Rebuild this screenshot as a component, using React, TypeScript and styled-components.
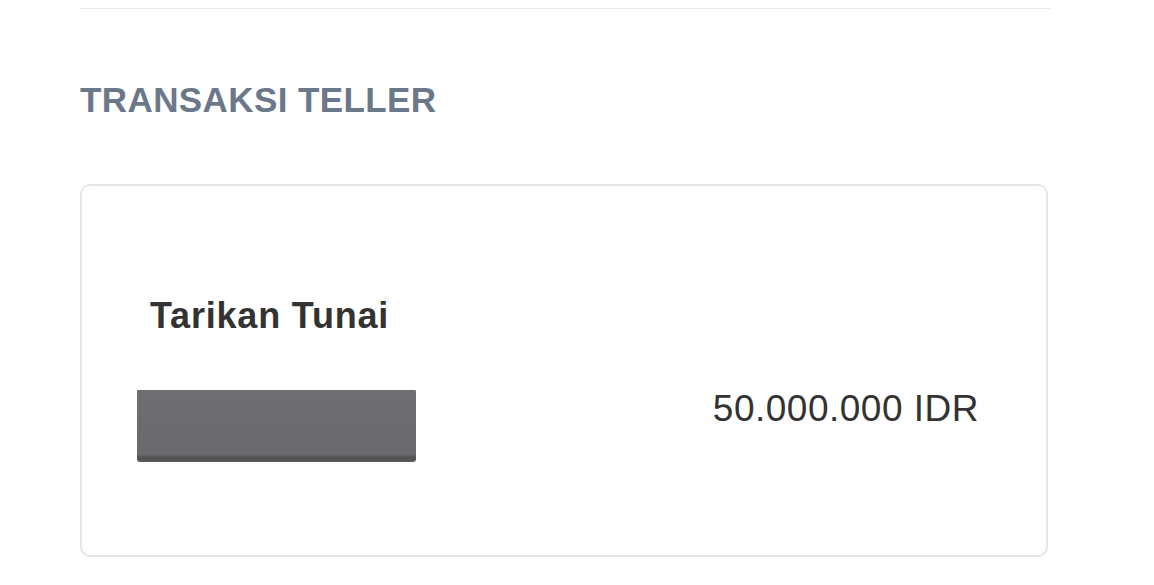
import { createGlobalStyle } from 'styled-components';
import styled from 'styled-components';

const GlobalStyle = createGlobalStyle`
  html, body {
    margin: 0;
    padding: 0;
    background: #ffffff;
    font-family: "Liberation Sans", Arial, sans-serif;
  }
`;

const Page = styled.div`
  width: 970px;
  margin-left: 80px;
  padding-top: 8px;
  padding-bottom: 28px;
`;

const Divider = styled.hr`
  margin: 0;
  border: none;
  border-top: 1px solid #e8e8e8;
`;

const SectionTitle = styled.h2`
  margin: 70px 0 0 0;
  font-size: 35px;
  line-height: 42px;
  font-weight: 700;
  color: #6b7889;
  letter-spacing: 0.4px;
`;

const Card = styled.div`
  margin-top: 63px;
  width: 968px;
  box-sizing: border-box;
  border: 2px solid #e6e6e6;
  border-radius: 10px;
  padding: 108px 67px 93px 55px;
  display: flex;
  flex-direction: column;
`;

const TxName = styled.div`
  margin-left: 13px;
  font-size: 36px;
  line-height: 44px;
  font-weight: 700;
  color: #333333;
  letter-spacing: 0.8px;
`;

const TxRow = styled.div`
  margin-top: 49px;
  display: flex;
  justify-content: space-between;
  align-items: flex-start;
`;

const Redacted = styled.div`
  margin-top: 3px;
  width: 279px;
  height: 72px;
  box-sizing: border-box;
  background: linear-gradient(#6f6f71, #6a6a6c 90%, #505053 94%, #5c5c5e);
  border-radius: 1px 1px 3px 3px;
`;

const Amount = styled.div`
  font-size: 37px;
  line-height: 44px;
  color: #333333;
  letter-spacing: 0.5px;
`;

export default function App() {
  return (
    <>
      <GlobalStyle />
      <Page>
        <Divider />
        <SectionTitle>TRANSAKSI TELLER</SectionTitle>
        <Card>
          <TxName>Tarikan Tunai</TxName>
          <TxRow>
            <Redacted />
            <Amount>50.000.000 IDR</Amount>
          </TxRow>
        </Card>
      </Page>
    </>
  );
}
